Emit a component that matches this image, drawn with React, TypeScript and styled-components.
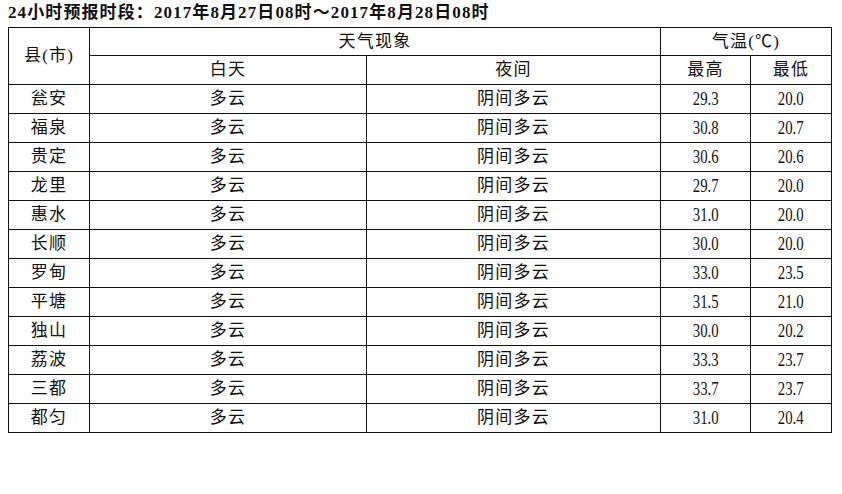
import React from 'react';
import styled, { createGlobalStyle } from 'styled-components';

const GlobalStyle = createGlobalStyle`
  html, body {
    margin: 0;
    padding: 0;
    background: #ffffff;
  }
`;

const Page = styled.div`
  width: 842px;
  height: 494px;
  padding: 3px 0 0 8px;
  box-sizing: border-box;
  background: #ffffff;
  color: #111;
  font-family: 'Liberation Serif', 'Noto Sans CJK SC', serif;
`;

const Title = styled.div`
  font-size: 17px;
  font-weight: 700;
  line-height: 20px;
  height: 24px;
  letter-spacing: 1.1px;
  white-space: nowrap;
`;

const Table = styled.table`
  border-collapse: collapse;
  table-layout: fixed;
  width: 823px;
`;

const Cell = styled.td<{ $h?: number }>`
  border: 1px solid #111;
  padding: 0;
  height: ${p => (p.$h ?? 29) - 1}px;
  text-align: center;
  vertical-align: middle;
  font-size: 17px;
  line-height: 20px;
  letter-spacing: 1.2px;
  font-weight: 400;
`;

// numbers in the source are a condensed serif
const Num = styled.span`
  display: inline-block;
  font-size: 18px;
  letter-spacing: 0;
  transform: scaleX(0.82);
`;

const rows = [
  ['瓮安', '29.3', '20.0'],
  ['福泉', '30.8', '20.7'],
  ['贵定', '30.6', '20.6'],
  ['龙里', '29.7', '20.0'],
  ['惠水', '31.0', '20.0'],
  ['长顺', '30.0', '20.0'],
  ['罗甸', '33.0', '23.5'],
  ['平塘', '31.5', '21.0'],
  ['独山', '30.0', '20.2'],
  ['荔波', '33.3', '23.7'],
  ['三都', '33.7', '23.7'],
  ['都匀', '31.0', '20.4'],
];

const App: React.FC = () => {
  return (
    <Page>
      <GlobalStyle />
      <Title>24小时预报时段：2017年8月27日08时～2017年8月28日08时</Title>
      <Table>
        <colgroup>
          <col style={{ width: 81 }} />
          <col style={{ width: 277 }} />
          <col style={{ width: 294 }} />
          <col style={{ width: 90 }} />
          <col style={{ width: 81 }} />
        </colgroup>
        <tbody>
          <tr>
            <Cell rowSpan={2} $h={28}>县(市)</Cell>
            <Cell colSpan={2} $h={28}>天气现象</Cell>
            <Cell colSpan={2} $h={28}>气温(℃)</Cell>
          </tr>
          <tr>
            <Cell>白天</Cell>
            <Cell>夜间</Cell>
            <Cell>最高</Cell>
            <Cell>最低</Cell>
          </tr>
          {rows.map(([name, hi, lo]) => (
            <tr key={name}>
              <Cell>{name}</Cell>
              <Cell>多云</Cell>
              <Cell>阴间多云</Cell>
              <Cell><Num>{hi}</Num></Cell>
              <Cell><Num>{lo}</Num></Cell>
            </tr>
          ))}
        </tbody>
      </Table>
    </Page>
  );
};

export default App;
